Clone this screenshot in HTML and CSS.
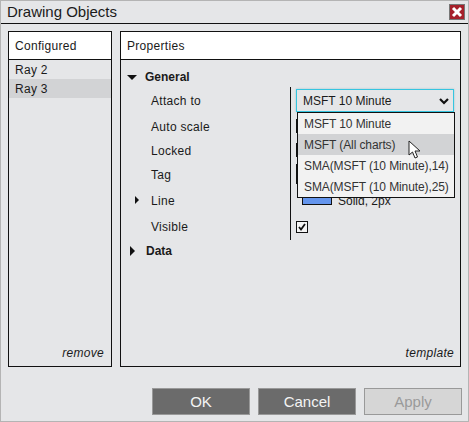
FILE: index.html
```html
<!DOCTYPE html>
<html lang="en">
<head>
    <meta charset="UTF-8">
    <title>Drawing Objects</title>
    <link rel="stylesheet" href="styles.css">
</head>
<body>
<main class="dialog">
    <header class="titlebar">
        <span class="title">Drawing Objects</span>
        <button class="close" type="button" aria-label="Close">
            <svg width="14" height="14" viewBox="0 0 14 14"><path d="M3 3l8 8M11 3l-8 8" stroke="#fff" stroke-width="3"/></svg>
        </button>
    </header>

    <section class="panels">
        <div class="panel panel-list">
            <div class="panel-head">Configured</div>
            <ul class="items">
                <li>Ray 2</li>
                <li class="selected">Ray 3</li>
            </ul>
            <div class="panel-foot">remove</div>
        </div>

        <div class="panel panel-props">
            <div class="panel-head">Properties</div>
            <div class="props">
                <div class="group"><span class="arrow-down"></span>General</div>
                <div class="grid">
                    <div class="row row-first">
                        <span class="label">Attach to</span>
                        <div class="value">
                            <div class="select">MSFT 10 Minute
                                <svg width="10" height="7" viewBox="0 0 10 7"><path d="M1 1l4 4 4-4" fill="none" stroke="#111" stroke-width="2.200"/></svg>
                            </div>
                        </div>
                    </div>
                    <div class="row"><span class="label">Auto scale</span><div class="value"><span class="hidden-box box-short"></span></div></div>
                    <div class="row"><span class="label">Locked</span><div class="value"><span class="hidden-box box-short"></span></div></div>
                    <div class="row"><span class="label">Tag</span><div class="value"><span class="hidden-box box-tall"></span></div></div>
                    <div class="row row-line">
                        <span class="label"><span class="arrow-small"></span>Line</span>
                        <div class="value"><span class="swatch"></span><span class="line-text">Solid, 2px</span></div>
                    </div>
                    <div class="row row-last">
                        <span class="label">Visible</span>
                        <div class="value">
                            <span class="check">
                                <svg width="8" height="8" viewBox="0 0 8 8"><path d="M1 4l2 2.500L7 1" fill="none" stroke="#111" stroke-width="1.800"/></svg>
                            </span>
                        </div>
                    </div>
                </div>
                <div class="group group-data"><span class="arrow-right"></span>Data</div>
            </div>
            <div class="panel-foot">template</div>

            <ul class="dropdown">
                <li>MSFT 10 Minute</li>
                <li class="hover">MSFT (All charts)</li>
                <li>SMA(MSFT (10 Minute),14)</li>
                <li>SMA(MSFT (10 Minute),25)</li>
            </ul>
            <svg class="cursor" width="14" height="20" viewBox="0 0 14 20"><path d="M1 1v14l3.500-3 2.500 6 2.500-1-2.500-6H12z" fill="#fff" stroke="#222" stroke-width="1"/></svg>
        </div>
    </section>

    <footer class="buttons">
        <button class="btn" type="button">OK</button>
        <button class="btn" type="button">Cancel</button>
        <button class="btn btn-off" type="button">Apply</button>
    </footer>
</main>
</body>
</html>
```

FILE: styles.css
```css
*{
    box-sizing: border-box;
}
body{
    margin: 0;
    font-family: "Liberation Sans", Arial, sans-serif;
    font-size: 12px;
    color: #1a1a1a;
}
.dialog{
    width: 469px;
    height: 422px;
    background: #e5e6e8;
    border: 1px solid #b4b4b4;
    display: flex;
    flex-direction: column;
}
.titlebar{
    height: 23px;
    flex: none;
    border-bottom: 1px solid #111;
    display: flex;
    align-items: center;
    justify-content: space-between;
    padding: 0 3px 0 6px;
}
.title{
    font-size: 15px;
    padding-bottom: 2px;
}
.close{
    width: 16px;
    height: 16px;
    padding: 0;
    border: 1px solid #777;
    background: #a5202a;
    display: flex;
    align-items: center;
    justify-content: center;
}
.panels{
    display: flex;
    gap: 8px;
    padding: 7px 7px 0;
    height: 343px;
    flex: none;
}
.panel{
    border: 1px solid #111;
    display: flex;
    flex-direction: column;
    position: relative;
}
.panel-list{
    width: 104px;
}
.panel-props{
    flex: 1;
}
.panel-head{
    height: 28px;
    flex: none;
    background: #fff;
    border-bottom: 1px solid #111;
    padding-left: 6px;
    line-height: 28px;
    letter-spacing: 0.3px;
}
.items{
    list-style: none;
    margin: 0;
    padding: 0;
    flex: 1;
}
.items li{
    height: 19px;
    line-height: 21px;
    padding-left: 6px;
    letter-spacing: 0.3px;
}
.items .selected{
    background: #d2d3d5;
}
.panel-foot{
    text-align: right;
    font-style: italic;
    padding: 0 7px 6px 0;
    letter-spacing: 0.3px;
}
.panel-props .panel-foot{
    padding-right: 6px;
}
.props{
    flex: 1;
    padding-top: 7px;
}
.group{
    height: 18px;
    padding: 2px 0 0 6px;
    font-weight: bold;
    display: flex;
    align-items: center;
}
.group-data{
    margin-top: 1px;
}
.arrow-down{
    width: 0;
    height: 0;
    border-left: 5px solid transparent;
    border-right: 5px solid transparent;
    border-top: 5px solid #111;
    margin-right: 8px;
}
.arrow-right{
    width: 0;
    height: 0;
    border-top: 5px solid transparent;
    border-bottom: 5px solid transparent;
    border-left: 5px solid #111;
    margin: 0 11px 0 3px;
}
.grid{
    margin-top: 2px;
}
.row{
    display: flex;
    height: 24px;
    align-items: center;
}
.row-first,
.row-line,
.row-last{
    height: 27px;
}
.label{
    width: 169px;
    padding: 2px 0 0 30px;
    letter-spacing: 0.3px;
    position: relative;
    flex: none;
}
.row-first .label,
.row-last .label{
    padding-top: 0;
}
.arrow-small{
    position: absolute;
    left: 14px;
    top: 4px;
    width: 0;
    height: 0;
    border-top: 4px solid transparent;
    border-bottom: 4px solid transparent;
    border-left: 4px solid #111;
}
.value{
    border-left: 1px solid #111;
    align-self: stretch;
    flex: 1;
    padding-left: 5px;
    padding-right: 6px;
    display: flex;
    align-items: center;
    white-space: nowrap;
}
.select{
    width: 158px;
    height: 23px;
    border: 1px solid #35c5e0;
    box-shadow: 0 0 2px #9fc4cc;
    display: flex;
    align-items: center;
    justify-content: space-between;
    padding: 1px 4px 0 6px;
}
.hidden-box{
    display: block;
    width: 20px;
    border: 1px solid #111;
}
.box-short{
    height: 14px;
}
.box-tall{
    height: 20px;
}
.swatch{
    width: 30px;
    height: 15px;
    background: #6495ed;
    border: 1px solid #111;
    margin: 0 6px;
    flex: none;
    position: relative;
    top: -2px;
}
.line-text{
    padding-top: 2px;
}
.check{
    width: 12px;
    height: 12px;
    border: 1px solid #111;
    background: #f4f4f4;
    display: flex;
    align-items: center;
    justify-content: center;
}
.dropdown{
    position: absolute;
    left: 176px;
    top: 80px;
    width: 158px;
    list-style: none;
    margin: 0;
    padding: 0;
    background: #f2f2f2;
    border: 1px solid #111;
    color: #333;
    white-space: nowrap;
}
.dropdown li{
    height: 21px;
    line-height: 23px;
    padding-left: 6px;
    letter-spacing: -0.1px;
}
.dropdown .hover{
    background: #d2d3d5;
}
.cursor{
    position: absolute;
    left: 287px;
    top: 108px;
}
.buttons{
    display: flex;
    justify-content: flex-end;
    gap: 8px;
    padding: 21px 6px 0 0;
}
.btn{
    width: 98px;
    height: 27px;
    border: 1px solid #999;
    background: #6b6b6b;
    color: #f4f4f4;
    font-family: "Liberation Sans", Arial, sans-serif;
    font-size: 15px;
    padding: 0;
}
.btn-off{
    background: #d6d6d6;
    color: #9a9a9a;
}
```
